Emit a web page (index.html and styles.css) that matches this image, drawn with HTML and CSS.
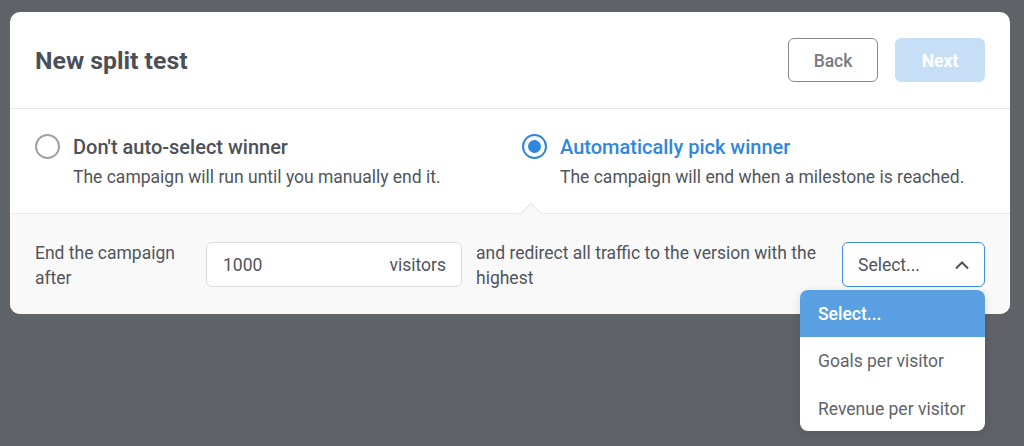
FILE: index.html
```html
<!DOCTYPE html>
<html>
<head>
<meta charset="utf-8">
<link rel="stylesheet" href="styles.css">
</head>
<body>
<div class="card">
  <div class="header">
    <h1 class="title">New split test</h1>
    <div class="actions">
      <button class="btn btn-back">Back</button>
      <button class="btn btn-next">Next</button>
    </div>
  </div>
  <div class="options">
    <div class="option">
      <span class="radio"></span>
      <div class="option-text">
        <div class="option-label">Don't auto-select winner</div>
        <div class="option-desc">The campaign will run until you manually end it.</div>
      </div>
    </div>
    <div class="option option-active">
      <span class="radio radio-on"></span>
      <div class="option-text">
        <div class="option-label">Automatically pick winner</div>
        <div class="option-desc">The campaign will end when a milestone is reached.</div>
      </div>
    </div>
  </div>
  <div class="settings">
    <span class="caret"></span>
    <div class="set-label">End the campaign after</div>
    <div class="field">
      <span class="field-value">1000</span>
      <span class="field-unit">visitors</span>
    </div>
    <div class="set-text">and redirect all traffic to the version with the highest</div>
    <div class="select-wrap">
      <div class="select">
        <span>Select...</span>
        <svg class="chev" width="16" height="10" viewBox="0 0 16 10"><path d="M2 8.5 L8 2.5 L14 8.5" fill="none" stroke="#4d5258" stroke-width="2"/></svg>
      </div>
      <ul class="menu">
        <li class="menu-item menu-item-active">Select...</li>
        <li class="menu-item">Goals per visitor</li>
        <li class="menu-item">Revenue per visitor</li>
      </ul>
    </div>
  </div>
</div>
</body>
</html>
```

FILE: styles.css
```css
* { box-sizing: border-box; }
html, body { margin: 0; height: 100%; }
body {
  background: #5f6368;
  padding: 12px 0 0 10px;
  font-family: Roboto, "Liberation Sans", sans-serif;
  color: #4c5157;
  overflow: hidden;
}
.card {
  width: 1000px;
  height: 302px;
  background: #fff;
  border-radius: 10px;
  display: flex;
  flex-direction: column;
}
.header {
  display: flex;
  align-items: center;
  justify-content: space-between;
  padding: 26px 25px 26px 25px;
  border-bottom: 1px solid #e6e6e6;
}
.title {
  margin: 0;
  font-size: 24.8px;
  font-weight: 700;
  color: #4b5057;
}
.actions { display: flex; gap: 17px; }
.btn {
  width: 90px;
  height: 44px;
  border-radius: 6px;
  font-family: Roboto, "Liberation Sans", sans-serif;
  font-size: 17.5px;
  font-weight: 500;
  padding-top: 2px;
}
.btn-back {
  background: #fff;
  border: 1px solid #858a90;
  color: #757b83;
}
.btn-next {
  background: #c7dff6;
  border: 1px solid #c7dff6;
  color: #fff;
  font-weight: 700;
}
.options {
  display: grid;
  grid-template-columns: 463px 463px;
  column-gap: 24px;
  padding: 26px 25px 0 25px;
  height: 105px;
  border-bottom: 1px solid #ebebeb;
}
.option { display: flex; gap: 13px; align-items: flex-start; }
.radio {
  width: 25px;
  height: 25px;
  border-radius: 50%;
  border: 2px solid #9da0a5;
  flex: none;
  margin-top: -1px;
}
.radio-on {
  border-color: #2f86de;
  display: flex;
  align-items: center;
  justify-content: center;
}
.radio-on::after {
  content: "";
  width: 13px;
  height: 13px;
  border-radius: 50%;
  background: #2f86de;
}
.option-label {
  font-size: 20px;
  font-weight: 500;
  line-height: 24px;
  color: #4c5157;
}
.option-active .option-label { color: #2f86de; }
.option-desc {
  font-size: 17.5px;
  line-height: 22px;
  margin-top: 7px;
  color: #50555c;
}
.settings {
  position: relative;
  flex: 1;
  background: #f9f9f9;
  border-radius: 0 0 10px 10px;
  display: flex;
  align-items: center;
  gap: 14px;
  padding: 0 25px 0 25px;
}
.caret {
  position: absolute;
  left: 513px;
  width: 16px;
  height: 16px;
  background: #f9f9f9;
  border-left: 1px solid #e6e6e6;
  border-top: 1px solid #e6e6e6;
  transform: rotate(45deg);
  top: -8px;
}
.set-label {
  width: 157px;
  font-size: 17.5px;
  line-height: 25px;
  padding-top: 3px;
  color: #50555c;
}
.field {
  width: 256px;
  height: 45px;
  background: #fff;
  border: 1px solid #dcdcdc;
  border-radius: 6px;
  display: flex;
  align-items: center;
  justify-content: space-between;
  padding: 1px 15px 0 16px;
  font-size: 17.5px;
  color: #50555c;
}
.set-text {
  flex: 1;
  font-size: 17.5px;
  line-height: 25px;
  padding-top: 3px;
  color: #50555c;
  padding-right: 12px;
}
.select-wrap { position: relative; }
.select {
  width: 143px;
  height: 45px;
  background: #fff;
  border: 1px solid #3b8ee0;
  border-radius: 6px;
  display: flex;
  align-items: center;
  justify-content: space-between;
  padding: 1px 14px 0 15px;
  font-size: 17.5px;
  color: #50555c;
}
.menu {
  position: absolute;
  right: 0;
  top: 48px;
  width: 185px;
  margin: 0;
  padding: 0;
  list-style: none;
  background: #fff;
  border-radius: 8px;
  overflow: hidden;
  box-shadow: 0 2px 10px rgba(0,0,0,0.12);
  z-index: 5;
}
.menu-item {
  height: 47.3px;
  display: flex;
  align-items: center;
  padding: 2px 18px 0 18px;
  font-size: 17.5px;
  color: #5f646b;
}
.menu-item-active {
  background: #5a9fe1;
  color: #fff;
  font-weight: 500;
}
```
